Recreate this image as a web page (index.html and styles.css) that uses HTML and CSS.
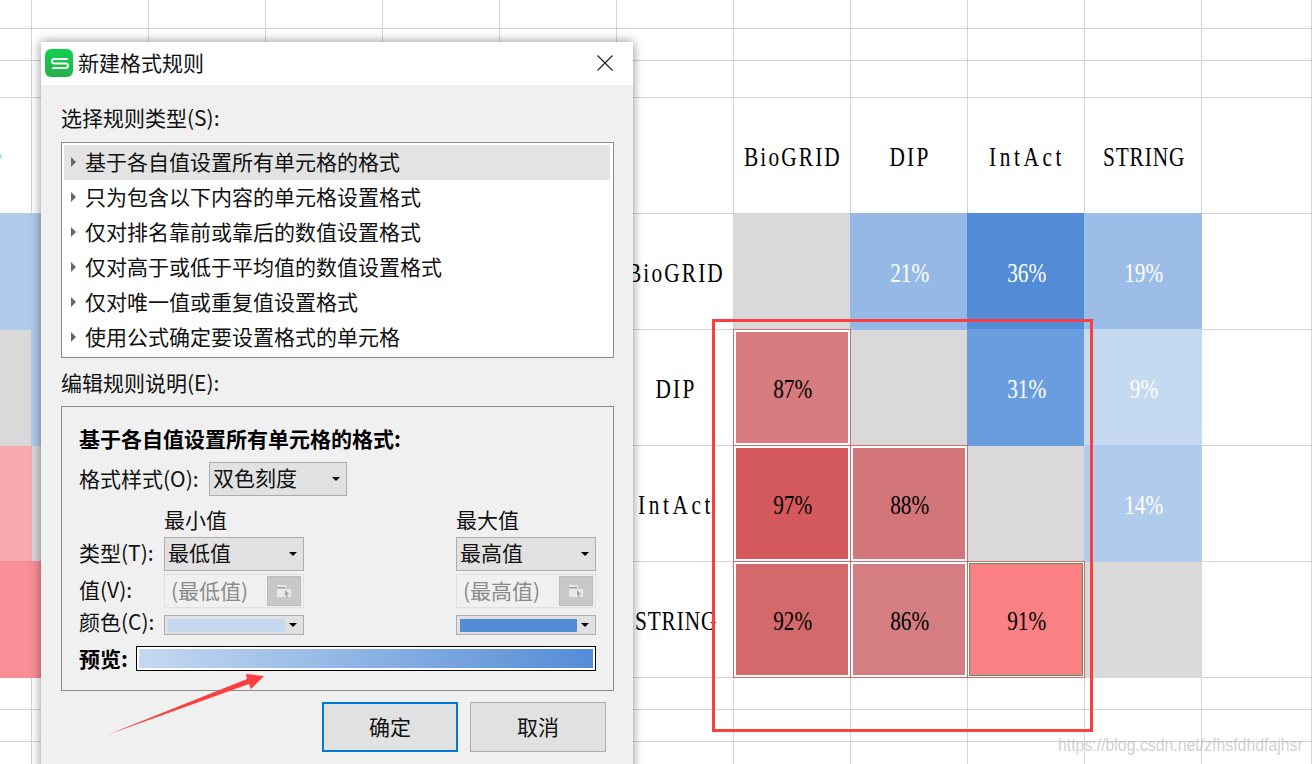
FILE: index.html
```html
<!DOCTYPE html>
<html lang="zh">
<head>
<meta charset="utf-8">
<title>新建格式规则</title>
<link rel="stylesheet" href="styles.css">
</head>
<body>
<div class="sheet">
  <div class="c"></div><div class="c"></div><div class="c"></div><div class="c"></div><div class="c"></div><div class="c"></div><div class="c"></div><div class="c"></div><div class="c"></div><div class="c"></div><div class="c"></div><div class="c"></div>
  <div class="c"></div><div class="c"></div><div class="c"></div><div class="c"></div><div class="c"></div><div class="c"></div><div class="c"></div><div class="c"></div><div class="c"></div><div class="c"></div><div class="c"></div><div class="c"></div>
  <div class="c"></div><div class="c"></div><div class="c"></div><div class="c"></div><div class="c"></div><div class="c"></div><div class="c"></div><div class="c"></div><div class="c"></div><div class="c"></div><div class="c"></div><div class="c"></div>

  <div class="c"></div><div class="c"></div><div class="c"></div><div class="c"></div><div class="c"></div><div class="c"></div><div class="c"></div>
  <div class="c t"><span class="n-bio">BioGRID</span></div><div class="c t"><span class="n-dip">DIP</span></div><div class="c t"><span class="n-int">IntAct</span></div><div class="c t"><span class="n-str">STRING</span></div><div class="c"></div>

  <div class="c f b14"></div><div class="c f b14"></div><div class="c"></div><div class="c"></div><div class="c"></div><div class="c"></div>
  <div class="c t"><span class="n-bio">BioGRID</span></div>
  <div class="c gray"></div><div class="c f b21 w t"><span>21%</span></div><div class="c f b36 w t"><span>36%</span></div><div class="c f b19 w t"><span>19%</span></div><div class="c"></div>

  <div class="c gray"></div><div class="c f b14"></div><div class="c"></div><div class="c"></div><div class="c"></div><div class="c"></div>
  <div class="c t"><span class="n-dip">DIP</span></div>
  <div class="c r r87 t"><span>87%</span></div><div class="c gray"></div><div class="c f b31 w t"><span>31%</span></div><div class="c f b9 w t"><span>9%</span></div><div class="c"></div>

  <div class="c p1"></div><div class="c gray"></div><div class="c"></div><div class="c"></div><div class="c"></div><div class="c"></div>
  <div class="c t"><span class="n-int">IntAct</span></div>
  <div class="c r r97 t"><span>97%</span></div><div class="c r r88 t"><span>88%</span></div><div class="c gray"></div><div class="c f b14 w t"><span>14%</span></div><div class="c"></div>

  <div class="c f p2"></div><div class="c f p2"></div><div class="c"></div><div class="c"></div><div class="c"></div><div class="c"></div>
  <div class="c t"><span class="n-str">STRING</span></div>
  <div class="c r r92 t"><span>92%</span></div><div class="c r r86 t"><span>86%</span></div><div class="c r r91 sel t"><span>91%</span></div><div class="c gray"></div><div class="c"></div>

  <div class="c"></div><div class="c"></div><div class="c"></div><div class="c"></div><div class="c"></div><div class="c"></div><div class="c"></div><div class="c"></div><div class="c"></div><div class="c"></div><div class="c"></div><div class="c"></div>
  <div class="c"></div><div class="c"></div><div class="c"></div><div class="c"></div><div class="c"></div><div class="c"></div><div class="c"></div><div class="c"></div><div class="c"></div><div class="c"></div><div class="c"></div><div class="c"></div>
  <div class="c"></div><div class="c"></div><div class="c"></div><div class="c"></div><div class="c"></div><div class="c"></div><div class="c"></div><div class="c"></div><div class="c"></div><div class="c"></div><div class="c"></div><div class="c"></div>
</div>

<div class="cyan-dot"></div>
<div class="red-frame"></div>
<div class="watermark">https://blog.csdn.net/zfhsfdhdfajhsr</div>

<div class="dialog">
  <div class="titlebar">
    <svg class="logo" viewBox="0 0 28 28" width="28" height="28">
      <defs><linearGradient id="lg" x1="0" y1="0" x2="0" y2="1"><stop offset="0" stop-color="#0fd04f"/><stop offset="1" stop-color="#27b04a"/></linearGradient></defs>
      <rect width="28" height="28" rx="6" fill="url(#lg)"/>
      <path d="M23 10H9.300a2.250 2.250 0 0 0 0 4.500h11.400a2.250 2.250 0 0 1 0 4.500H7" fill="none" stroke="#f2fff6" stroke-width="2"/>
    </svg>
    <span class="title">新建格式规则</span>
    <svg class="close" viewBox="0 0 16 16" width="16" height="16"><path d="M.5.500l15 15M15.500.500l-15 15" stroke="#222" stroke-width="1.200" fill="none"/></svg>
  </div>
  <div class="body">
    <div class="lbl sec1">选择规则类型(S):</div>
    <ul class="rules">
      <li class="on">基于各自值设置所有单元格的格式</li>
      <li>只为包含以下内容的单元格设置格式</li>
      <li>仅对排名靠前或靠后的数值设置格式</li>
      <li>仅对高于或低于平均值的数值设置格式</li>
      <li>仅对唯一值或重复值设置格式</li>
      <li>使用公式确定要设置格式的单元格</li>
    </ul>
    <div class="lbl sec2">编辑规则说明(E):</div>
    <div class="group">
      <div class="heading">基于各自值设置所有单元格的格式:</div>
      <div class="row-style">
        <span class="lbl style-lbl">格式样式(O):</span>
        <div class="dd dd-style"><span>双色刻度</span><i class="caret"></i></div>
      </div>
      <div class="matrix">
        <div class="lbl head">最小值</div><div class="lbl head max">最大值</div>
        <div class="lbl key">类型(T):</div>
        <div class="dd dd-a"><span>最低值</span><i class="caret"></i></div>
        <div class="dd dd-a max"><span>最高值</span><i class="caret"></i></div>
        <div class="lbl key">值(V):</div>
        <div class="val"><span>(最低值)</span><b class="pick"><svg viewBox="0 0 16 14" width="16" height="14"><path fill="#e8e8e8" d="M1 1h9v3H1zM1 5h9v8H1zM10 5h5v8h-5z"/><path fill="#a0a0a0" d="M1 3h8v1H1zM9 6l4 4-2 .5 1 2.500-1 .500-1-2.500-1 1z"/></svg></b></div>
        <div class="val max"><span>(最高值)</span><b class="pick"><svg viewBox="0 0 16 14" width="16" height="14"><path fill="#e8e8e8" d="M1 1h9v3H1zM1 5h9v8H1zM10 5h5v8h-5z"/><path fill="#a0a0a0" d="M1 3h8v1H1zM9 6l4 4-2 .5 1 2.500-1 .500-1-2.500-1 1z"/></svg></b></div>
        <div class="lbl key key-c">颜色(C):</div>
        <div class="dd dd-c"><em class="sw lo"></em><i class="caret"></i></div>
        <div class="dd dd-c max"><em class="sw hi"></em><i class="caret"></i></div>
      </div>
      <div class="preview-row">
        <span class="preview-lbl">预览:</span>
        <div class="bar"></div>
      </div>
    </div>
    <div class="actions">
      <div class="btn ok">确定</div>
      <div class="btn">取消</div>
    </div>
  </div>
</div>

<svg class="arrow" viewBox="0 0 170 70" width="170" height="70"><path fill="#f93f3f" d="M0 63 L140 7 L139 2 L157 4 L144 17 L142 12 Z"/></svg>
</body>
</html>
```

FILE: styles.css
```css
* { box-sizing: border-box; }
html, body { margin: 0; height: 764px; overflow: hidden; background: #fff; }
body { position: relative; font-family: "Noto Sans CJK SC", "Noto Sans", sans-serif; color: #111; }

.sheet {
  display: grid;
  grid-template-columns: 32px repeat(10, 117px) 110px;
  grid-template-rows: 29px 32px 37px 116px 116px 116px 116px 116px 32px 32px 23px;
  width: 1312px;
}
.c {
  border-right: 1px solid #d4d4d4;
  border-bottom: 1px solid #d4d4d4;
  display: flex;
  align-items: center;
  justify-content: center;
  overflow: hidden;
}
.t span {
  font-family: "Liberation Serif", serif;
  font-size: 27px;
  line-height: 1;
  color: #000;
  display: inline-block;
  white-space: nowrap;
  transform: translate(1px, 2px) scaleX(.79);
}
.t .n-bio { letter-spacing: 2.700px; }
.t .n-dip { letter-spacing: 2.800px; }
.t .n-int { letter-spacing: 4.500px; }
.t .n-str { letter-spacing: 1.100px; }
.w span { color: #fff; }
.f { margin: -1px 0 0 -1px; }
.gray { background: #d9d9d9; border-color: #d9d9d9; }
.b14 { background: #b1cbec; border-color: #b1cbec; }
.b21 { background: #95b8e6; border-color: #95b8e6; }
.b36 { background: #538cd6; border-color: #538cd6; }
.b19 { background: #9dbde9; border-color: #9dbde9; }
.b31 { background: #6a9ddd; border-color: #6a9ddd; }
.b9  { background: #c5d9f1; border-color: #c5d9f1; }
.p1 { background: #f9a8b0; border-color: #f9a8b0; }
.p2 { background: #f98f96; border-color: #f98f96; }
.r { margin: -1px 0 0 -1px; border: 1px solid #cf6a6e; box-shadow: inset 0 0 0 2px #fff; }
.r87 { background: #d67b7e; }
.r97 { background: #d4595c; }
.r88 { background: #d3767a; }
.r92 { background: #d3696b; }
.r86 { background: #d47e81; }
.r91 { background: #fa8084; }
.sel { box-shadow: inset 0 0 0 1px #fff, inset 0 0 0 2px #4c9a58; }

.cyan-dot {
  position: absolute; left: -2px; top: 154px;
  width: 4px; height: 5px; border-radius: 50%; background: #7fefff;
}
.red-frame {
  position: absolute; left: 712px; top: 319px;
  width: 381px; height: 413px;
  border: 3px solid #f93f3f;
}
.watermark {
  position: absolute; left: 1058px; top: 734px;
  font-family: "Liberation Sans", sans-serif;
  font-size: 17.500px;
  line-height: 22px;
  color: rgba(175,175,175,.6);
  white-space: nowrap;
  transform-origin: left center;
  transform: scaleX(.905);
}

.dialog {
  position: absolute; left: 41px; top: 42px;
  width: 592px; height: 740px;
  background: #f0f0f0;
  box-shadow: 0 0 10px rgba(0,0,0,.45);
}
.titlebar {
  height: 43px; background: #fff;
  display: flex; align-items: center;
  padding: 0 20px 1px 4px;
}
.logo { flex: none; }
.title { font-size: 21px; line-height: 1; margin: 0 0 2px 5px; flex: 1; }
.close { flex: none; }

.body { padding: 20px 19px 0 20px; }
.lbl { font-size: 21px; line-height: 24px; white-space: nowrap; color: #111; }
.sec1 { height: 28px; margin-bottom: 9px; }
.rules {
  list-style: none; margin: 0; padding: 2px;
  height: 216px; background: #fff; border: 1px solid #8a8a8a;
}
.rules li {
  height: 35px; line-height: 33px;
  font-size: 21px; padding-left: 21px;
  position: relative; white-space: nowrap; width: 546px;
}
.rules li::before {
  content: ""; position: absolute; left: 7px; top: 12px;
  border-left: 5px solid #666; border-top: 5px solid transparent; border-bottom: 5px solid transparent;
}
.rules li.on { background: #e3e3e3; }
.sec2 { margin-top: 12px; height: 28px; margin-bottom: 8px; }
.group {
  width: 553px; height: 285px; border: 1px solid #8a8a8a;
  padding: 18px 17px 0 17px;
}
.heading { font-size: 21px; font-weight: 700; line-height: 26px; color: #000; white-space: nowrap; }
.row-style { display: flex; align-items: center; height: 34px; margin-top: 11px; }
.style-lbl { width: 130px; padding-bottom: 2px; }
.dd {
  display: flex; align-items: center; justify-content: space-between;
  background: #e1e1e1; border: 1px solid #adadad;
  padding: 0 6px 0 3px; font-size: 21px; line-height: 1;
}
.dd span { padding-bottom: 3px; }
.dd-style { width: 138px; height: 34px; }
.caret { width: 0; height: 0; border-left: 4px solid transparent; border-right: 4px solid transparent; border-top: 4px solid #000; flex: none; }
.matrix {
  display: grid;
  grid-template-columns: 85px 140px 152px 140px;
  grid-template-rows: 26px 34px 34px 24px;
  row-gap: 3px;
  margin-top: 12px;
  align-items: center;
}
.head { grid-column: 2; padding-bottom: 5px; }
.head.max { grid-column: 4; grid-row: 1; }
.key { grid-column: 1; padding-bottom: 4px; }
.key-c { align-self: end; line-height: 20px; padding-bottom: 4px; }
.dd-a { grid-column: 2; height: 34px; }
.dd-a.max, .val.max, .dd-c.max { grid-column: 4; }
.val {
  grid-column: 2; height: 34px;
  border: 1px solid #e0e0e0; background: #f0f0f0;
  display: flex; align-items: center; justify-content: space-between;
  padding: 0 2px 0 6px; font-size: 21px; line-height: 28px; color: #8a8a8a;
}
.val span { padding-bottom: 2px; }
.pick {
  width: 34px; height: 30px; background: #c8c8c8; border: 1px solid #bcbcbc;
  display: flex; align-items: center; justify-content: center;
}
.dd-c { grid-column: 2; height: 20px; align-self: end; }
.sw { display: block; width: 117px; height: 13px; }
.lo { background: #c5d9f1; }
.hi { background: #538cd6; }
.preview-row { display: flex; align-items: center; margin-top: 11px; }
.preview-lbl { width: 57px; font-size: 21px; font-weight: 700; line-height: 25px; color: #000; white-space: nowrap; }
.bar {
  width: 460px; height: 25px; border: 1px solid #000;
  box-shadow: inset 0 0 0 2px #fff;
  background: linear-gradient(90deg, #c5d9f1, #538cd6);
}
.actions { display: flex; gap: 12px; margin-top: 11px; padding-left: 261px; }
.btn {
  width: 136px; height: 50px; background: #e1e1e1; border: 1px solid #adadad;
  display: flex; align-items: center; justify-content: center;
  font-size: 21px; color: #111; padding-bottom: 2px;
}
.btn.ok { border: 2px solid #0078d7; }

.arrow { position: absolute; left: 107px; top: 672px; width: 170px; height: 70px; }
```
